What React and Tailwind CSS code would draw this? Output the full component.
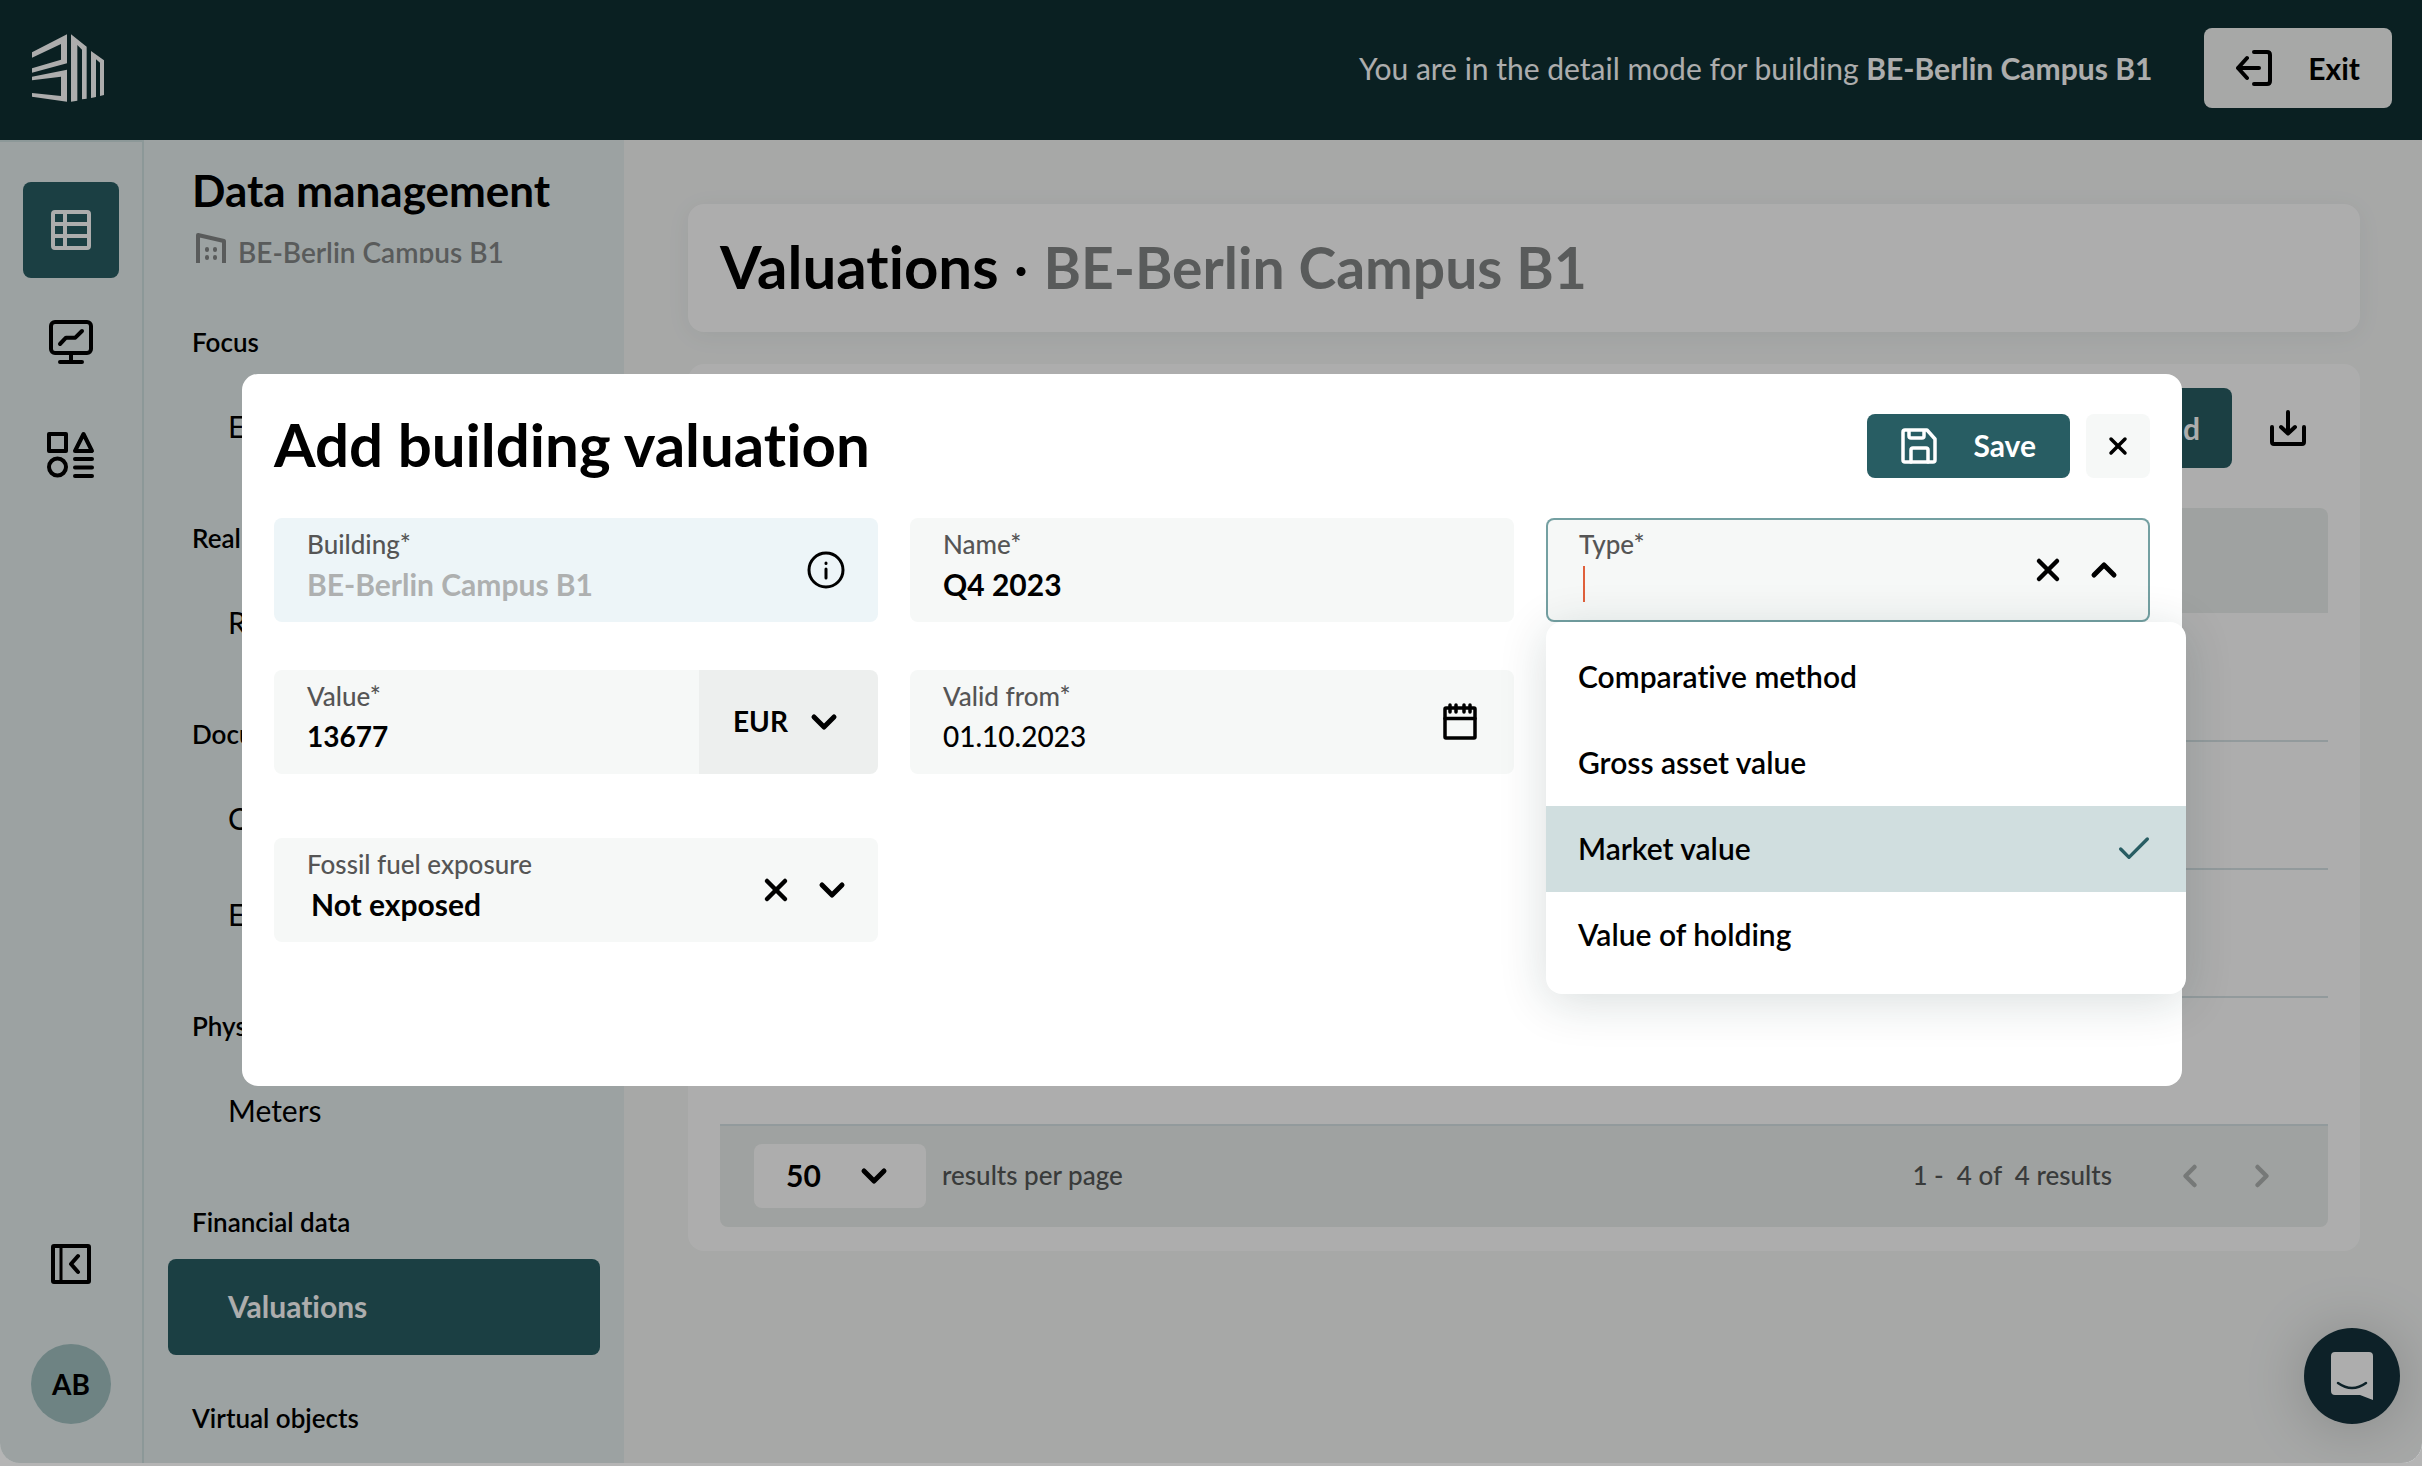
import { useState } from 'react';
import { Check, ChevronDown, ChevronLeft, ChevronRight, ChevronUp, X } from 'lucide-react';

const Icon = ({ size = 36, width, height, stroke = 4, children }) => (
  <svg
    width={width || size}
    height={height || size}
    viewBox={`0 0 ${width || size} ${height || size}`}
    fill="none"
    stroke="currentColor"
    strokeWidth={stroke}
    strokeLinecap="round"
    strokeLinejoin="round"
    className="shrink-0"
    aria-hidden="true"
  >
    {children}
  </svg>
);

const Logo = () => (
  <svg width="72" height="68" viewBox="0 0 216 202" fill="currentColor" aria-hidden="true">
    <polygon points="0,54 105,0 105,87 0,115 0,102 87,76 87,29 0,70" />
    <polygon points="0,127 105,106 105,202 0,187 0,176 87,185 87,127 0,138" />
    <polygon points="117,0 164,37 164,193 150,195 150,46 136,32 136,199 117,202" />
    <polygon points="177,50 216,78 216,182 204,185 204,85 192,75 192,188 177,191" />
  </svg>
);

const TableIcon = () => (
  <Icon size={40}>
    <rect x="2" y="2" width="36" height="36" rx="2" />
    <path d="M14 2v36M2 14h36M2 26h36" />
  </Icon>
);

const MonitorIcon = () => (
  <Icon size={44}>
    <rect x="2" y="2" width="40" height="31" rx="4" />
    <path d="M11 24l6-6.300h9.300L33 11M22 34v7M11 42h22" />
  </Icon>
);

const ShapesIcon = () => (
  <Icon size={48}>
    <rect x="2" y="4" width="17" height="17" />
    <path d="M36.500 4l8.500 17H28z" />
    <circle cx="10.500" cy="37" r="8.500" />
    <path d="M28 29h17M28 37.500h17M28 46h17" />
  </Icon>
);

const CollapseIcon = () => (
  <Icon size={40}>
    <rect x="2" y="2" width="36" height="36" rx="1" />
    <path d="M10 2v36" strokeWidth="3" />
    <path d="M27 12l-7 8 7 8" />
  </Icon>
);

const BuildingIcon = () => (
  <Icon width={30} height={32} stroke={4}>
    <path d="M2 40V3l26 6v31" />
    <path d="M11 17v1M19 17v1M11 25v1M19 25v1" />
  </Icon>
);

const ExitIcon = () => (
  <Icon>
    <path d="M18 2h13q3 0 3 3v26q0 3-3 3H18M2 18h21M11 8L2 18l9 10" />
  </Icon>
);

const SaveIcon = () => (
  <Icon stroke={3.5}>
    <path d="M2 4q0-2 2-2h22l8 9v21q0 2-2 2H4q-2 0-2-2z" />
    <path d="M8 3v5q0 2 2 2h11q2 0 2-2V3M10 34V22q0-2 2-2h13q2 0 2 2v12" />
  </Icon>
);

const DownloadIcon = () => (
  <Icon>
    <path d="M2 17v15q0 2 2 2h28q2 0 2-2V17M18 2v21M11 17l7 6.500 7-6.500" />
  </Icon>
);

const CalendarIcon = () => (
  <Icon width={34} height={37} stroke={3.5}>
    <rect x="2" y="5" width="30" height="30" rx="1" />
    <path d="M2 15.500h30M7 2v7M13 2v7M21 2v7M27 2v7" />
  </Icon>
);

const InfoIcon = () => (
  <Icon size={38} stroke={3}>
    <circle cx="19" cy="19" r="17" />
    <path d="M19 18v9M19 12v0.500" />
  </Icon>
);

const sections = [
  { title: 'Focus', items: ['Energy'] },
  { title: 'Real estate', items: ['Rental units'] },
  { title: 'Documents', items: ['Contracts', 'Evidence'] },
  { title: 'Physical objects', items: ['Meters'] },
  { title: 'Financial data', items: ['Valuations'] },
  { title: 'Virtual objects', items: [] },
];

const types = ['Comparative method', 'Gross asset value', 'Market value', 'Value of holding'];

const Header = () => (
  <header className="flex h-[140px] shrink-0 items-center justify-between bg-[#103033] pr-[30px] pb-1 pl-8 text-white">
    <Logo />
    <div className="flex items-center gap-[52px] text-[30px]">
      <p>
        You are in the detail mode for building <strong className="font-bold">BE-Berlin Campus B1</strong>
      </p>
      <button className="flex h-20 items-center gap-9 rounded-lg bg-[#f6f8f7] px-8 font-bold text-black">
        <ExitIcon />
        Exit
      </button>
    </div>
  </header>
);

const Rail = () => (
  <nav className="flex w-36 shrink-0 flex-col items-center border-t-2 border-r-2 border-[#cee1e1] pt-10 pb-[39px]" aria-label="Main">
    <button aria-label="Data" className="flex size-24 items-center justify-center rounded-lg bg-[#285d63] text-white">
      <TableIcon />
    </button>
    <button aria-label="Reports" className="mt-4 flex size-24 items-center justify-center">
      <MonitorIcon />
    </button>
    <button aria-label="Objects" className="mt-4 flex size-24 items-center justify-center">
      <ShapesIcon />
    </button>
    <button aria-label="Collapse menu" className="mt-auto mb-[60px]">
      <CollapseIcon />
    </button>
    <button className="flex size-20 items-center justify-center rounded-full bg-[#a2c2c2] text-[28px] font-bold">AB</button>
  </nav>
);

const Sidebar = () => (
  <aside className="w-[480px] shrink-0 overflow-hidden px-6 pt-[26px]">
    <div className="h-[113px] px-6">
      <h2 className="text-[44px] leading-12 font-bold">Data management</h2>
      <div className="mt-[18px] flex h-[31px] gap-3 overflow-hidden pl-1 text-[28px] leading-10 font-semibold text-[#848786]">
        <BuildingIcon />
        <span>BE-Berlin Campus B1</span>
      </div>
    </div>
    {sections.map((section) => (
      <div key={section.title}>
        <h3 className="flex h-[100px] items-end px-6 pb-[22px] text-[26px] leading-[30px] font-semibold">{section.title}</h3>
        {section.items.map((item) => (
          <a
            key={item}
            href="#"
            className={`flex h-24 items-center rounded-lg px-[60px] pb-0.5 text-[30px] ${
              item === 'Valuations' ? 'bg-[#285d63] font-bold text-white' : ''
            }`}
          >
            {item}
          </a>
        ))}
      </div>
    ))}
  </aside>
);

const ResultsTable = () => (
  <section className="mt-8 rounded-2xl bg-white px-8 py-6">
    <div className="flex justify-end gap-[38px]">
      <button className="h-20 rounded-lg bg-[#285d63] px-8 text-[30px] font-bold text-white">Add</button>
      <button aria-label="Download" className="mr-[22px]">
        <DownloadIcon />
      </button>
    </div>
    <table className="mt-10 w-full">
      <thead>
        <tr className="h-[105px]">
          <th className="rounded-t-lg bg-[#ebefed]" />
        </tr>
      </thead>
      <tbody>
        {[1, 2, 3, 4].map((row) => (
          <tr key={row} className="h-32 border-b-2 border-[#d8e3e6]">
            <td />
          </tr>
        ))}
      </tbody>
    </table>
    <div className="flex h-[101px] items-center rounded-b-lg bg-[#ebefed] px-[34px] pb-0.5 text-[26px] font-medium text-[#555857]">
      <div className="relative flex items-center">
        <select
          id="page-size"
          defaultValue="50"
          className="h-16 w-[172px] appearance-none rounded-lg bg-white px-8 text-[30px] font-bold text-black"
        >
          <option>50</option>
          <option>100</option>
        </select>
        <ChevronDown size={40} strokeWidth={3} className="pointer-events-none absolute right-8 text-black" />
      </div>
      <label htmlFor="page-size" className="ml-4">
        results per page
      </label>
      <span className="ml-auto whitespace-pre">1 -  4 of  4 results</span>
      <button aria-label="Previous page" className="ml-[60px] text-[#afb3b1]">
        <ChevronLeft size={36} strokeWidth={3} />
      </button>
      <button aria-label="Next page" className="mr-[14px] ml-9 text-[#afb3b1]">
        <ChevronRight size={36} strokeWidth={3} />
      </button>
    </div>
  </section>
);

const Field = ({ id, label, className = 'bg-[#f6f8f7]', children, after }) => (
  <div className={`flex h-[104px] items-center rounded-lg pl-[33px] ${className}`}>
    <div className="flex min-w-0 grow flex-col pb-1">
      <label htmlFor={id} className="text-[26px] leading-8 font-medium text-[#555]">
        {label}
      </label>
      <div className="flex h-12 items-center">{children}</div>
    </div>
    {after}
  </div>
);

const inputClass = 'w-full min-w-0 appearance-none bg-transparent leading-10 font-bold outline-none';

const ValuationDialog = () => {
  const [type, setType] = useState('Market value');

  return (
    <div role="dialog" aria-labelledby="dialog-title" className="h-[712px] w-full rounded-2xl bg-white px-8 pt-10">
      <div className="flex items-center">
        <h2 id="dialog-title" className="mr-auto pb-1 text-[60px] leading-[60px] font-bold">
          Add building valuation
        </h2>
        <button className="flex h-16 items-center gap-9 rounded-lg bg-[#285d63] px-[34px] text-[30px] font-bold text-white">
          <SaveIcon />
          Save
        </button>
        <button aria-label="Close" className="ml-4 flex size-16 items-center justify-center rounded-lg bg-[#f6f8f7]">
          <X size={28} strokeWidth={3} />
        </button>
      </div>

      <form className="mt-10 grid grid-cols-3 gap-x-8">
        <Field
          id="building"
          label="Building*"
          className="bg-[#edf5f8]"
          after={<span className="mr-[33px]"><InfoIcon /></span>}
        >
          <input id="building" disabled defaultValue="BE-Berlin Campus B1" className={`${inputClass} text-[30px] text-[#aeb0b0]`} />
        </Field>

        <Field id="name" label="Name*">
          <input id="name" defaultValue="Q4 2023" className={`${inputClass} text-[30px]`} />
        </Field>

        <div className="relative">
          <Field
            id="type"
            label="Type*"
            className="bg-[#f6f8f7] ring-2 ring-[#74a0a2] ring-inset"
            after={
              <>
                <button type="button" aria-label="Clear type" className="mr-[18px]">
                  <X size={36} strokeWidth={3} />
                </button>
                <ChevronUp size={40} strokeWidth={3} className="mr-[26px] shrink-0" />
              </>
            }
          >
            <span className="ml-1 h-9 w-0.5 shrink-0 bg-[#e0603b]" />
            <input id="type" role="combobox" aria-expanded="true" aria-controls="type-list" className={`${inputClass} text-[30px]`} />
          </Field>
          <ul
            id="type-list"
            role="listbox"
            className="absolute top-full left-0 z-10 w-[640px] rounded-2xl bg-white pt-3 pb-4 shadow-[0_8px_48px_rgba(16,48,51,0.16)]"
          >
            {types.map((name) => (
              <li
                key={name}
                role="option"
                aria-selected={name === type}
                onClick={() => setType(name)}
                className={`flex h-[86px] items-center justify-between px-8 text-[30px] font-semibold ${
                  name === type ? 'bg-[#d0dedf]' : ''
                }`}
              >
                {name}
                {name === type && <Check size={40} strokeWidth={2} className="text-[#285d63]" />}
              </li>
            ))}
          </ul>
        </div>

        <div className="mt-12 flex">
          <div className="min-w-0 grow">
            <Field id="value" label="Value*" className="rounded-r-none bg-[#f6f8f7]">
              <input id="value" defaultValue="13677" className={`${inputClass} text-[28px]`} />
            </Field>
          </div>
          <div className="relative flex w-[179px] shrink-0 items-center rounded-r-lg bg-[#edefee]">
            <select aria-label="Currency" defaultValue="EUR" className={`${inputClass} h-full px-[34px] pb-0.5 text-[28px]`}>
              <option>EUR</option>
              <option>USD</option>
            </select>
            <ChevronDown size={40} strokeWidth={3} className="pointer-events-none absolute right-[34px]" />
          </div>
        </div>

        <div className="mt-12">
          <Field
            id="valid-from"
            label="Valid from*"
            after={
              <button type="button" aria-label="Open calendar" className="mr-[37px]">
                <CalendarIcon />
              </button>
            }
          >
            <input
              id="valid-from"
              defaultValue="01.10.2023"
              className="w-full min-w-0 bg-transparent text-[28px] leading-10 font-medium outline-none"
            />
          </Field>
        </div>

        <div className="col-start-1 mt-16">
          <Field
            id="fossil"
            label="Fossil fuel exposure"
            after={
              <>
                <button type="button" aria-label="Clear exposure" className="mr-[18px]">
                  <X size={36} strokeWidth={3} />
                </button>
                <ChevronDown size={40} strokeWidth={3} className="mr-[26px] shrink-0" />
              </>
            }
          >
            <select id="fossil" defaultValue="Not exposed" className={`${inputClass} pl-1 text-[30px]`}>
              <option>Not exposed</option>
              <option>Exposed</option>
            </select>
          </Field>
        </div>
      </form>
    </div>
  );
};

const App = () => (
  <div className="h-screen bg-[#b5b5b5] pb-[3px] font-[Lato,sans-serif] text-black [font-variant-ligatures:none]">
    <div className="relative flex h-full flex-col overflow-hidden rounded-b-[20px] bg-[#e6efef]">
      <Header />
      <div className="flex min-h-0 grow">
        <Rail />
        <Sidebar />
        <main className="min-w-0 grow bg-[#f6f8f7] pt-16 pr-[62px] pl-16">
          <h1 className="h-32 rounded-2xl bg-white px-8 text-[60px] leading-[124px] font-bold shadow-[0_4px_24px_rgba(16,48,51,0.06)]">
            Valuations <span className="font-normal">·</span>{' '}
            <span className="text-[57px] text-[#848786]">BE-Berlin Campus B1</span>
          </h1>
          <ResultsTable />
        </main>
      </div>

      <button
        aria-label="Open chat"
        className="absolute right-[22px] bottom-[39px] flex size-24 items-center justify-center rounded-full bg-[#14323c] text-white shadow-[0_4px_64px_rgba(0,0,0,0.2)]"
      >
        <svg width="42" height="48" viewBox="0 0 42 48" aria-hidden="true">
          <path d="M4 0h34q4 0 4 4v44l-13-5H4q-4 0-4-4V4q0-4 4-4z" fill="currentColor" />
          <path d="M7 31q14 10 28 0" fill="none" stroke="#14323c" strokeWidth="2.500" strokeLinecap="round" />
        </svg>
      </button>

      <div className="absolute inset-0 flex items-center bg-black/32 pr-60 pb-1 pl-[242px]">
        <ValuationDialog />
      </div>
    </div>
  </div>
);

export default App;
